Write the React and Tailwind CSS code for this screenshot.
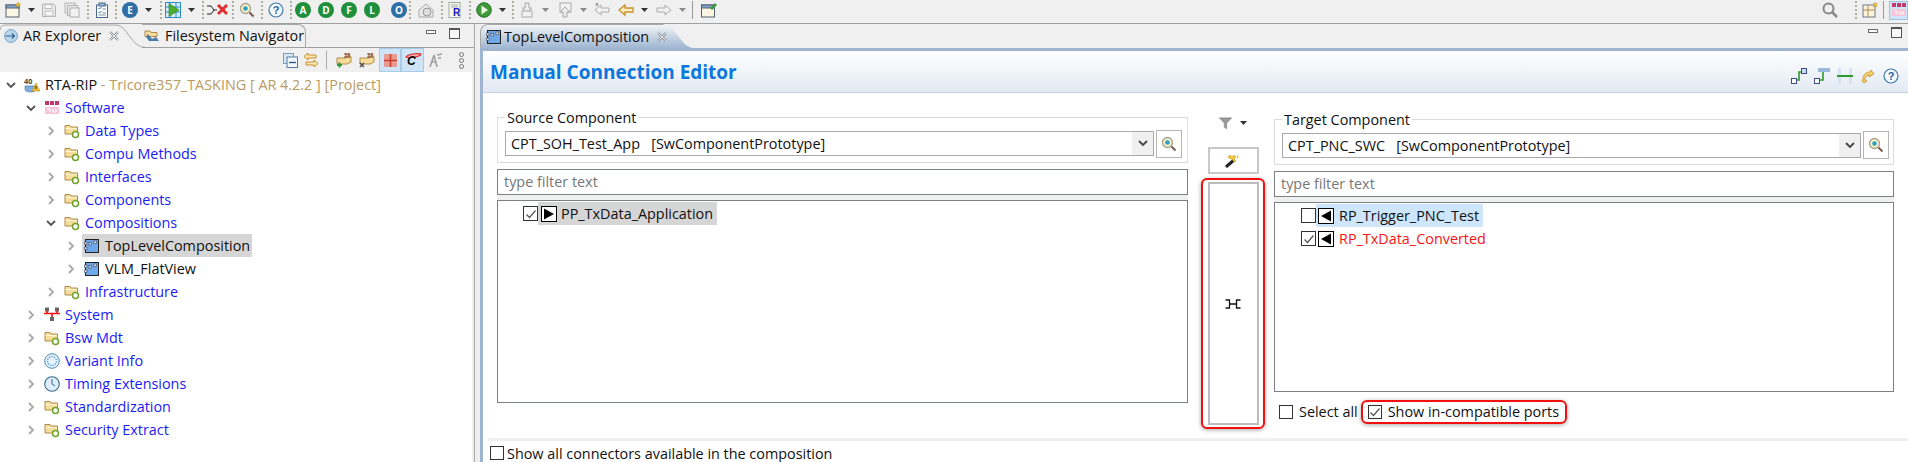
import React from 'react';

const Arrow = ({ className = 'ml-[7px]', gray }) => (
  <svg width="7" height="4" viewBox="0 0 7 4" className={`shrink-0 ${className}`}>
    <path d="M0 0h7L3.5 4z" fill={gray ? '#8a8a8a' : '#333'} />
  </svg>
);

const Dots = ({ className }) => (
  <div className={`flex flex-col gap-[2px] ${className}`}>
    <div className="w-[2px] h-[2px] bg-[#b0b0a0]" />
    <div className="w-[2px] h-[2px] bg-[#b0b0a0]" />
    <div className="w-[2px] h-[2px] bg-[#b0b0a0]" />
    <div className="w-[2px] h-[2px] bg-[#b0b0a0]" />
    <div className="w-[2px] h-[2px] bg-[#b0b0a0]" />
  </div>
);

const Ball = ({ letter, className, color = '#1f8f3c' }) => (
  <div
    className={`w-[16px] h-[16px] rounded-full flex items-center justify-center text-white text-[10px] font-bold ${className}`}
    style={{ background: color }}
  >
    {letter}
  </div>
);

const Svg16 = ({ className, children, size = 16 }) => (
  <svg width={size} height={size} viewBox="0 0 16 16" className={`shrink-0 ${className || ''}`}>
    {children}
  </svg>
);

const NewIcon = ({ className }) => (
  <Svg16 className={className}>
    <rect x="1" y="3" width="13" height="12" fill="#fbf6e4" stroke="#55606e" />
    <rect x="1" y="3" width="13" height="3" fill="#7ea6d0" stroke="#55606e" />
    <path d="M13 0l.8 1.7 1.7.3-1.3 1.2.3 1.8-1.5-.9-1.5.9.3-1.8L11 2l1.7-.3z" fill="#f2c230" stroke="#a97f10" strokeWidth=".4" />
  </Svg16>
);

const SaveIcon = ({ className }) => (
  <Svg16 className={className}>
    <path d="M1.5 2h11l2 2v10.500h-13z" fill="#ececec" stroke="#b5b5b5" />
    <rect x="4" y="2.500" width="7" height="4" fill="#f7f7f7" stroke="#bdbdbd" />
    <rect x="4" y="9" width="8" height="5" fill="#f7f7f7" stroke="#bdbdbd" />
  </Svg16>
);

const SaveAllIcon = ({ className }) => (
  <Svg16 className={className}>
    <rect x="1" y="1" width="10" height="10" fill="#e8e8e8" stroke="#b5b5b5" />
    <rect x="3.500" y="3.500" width="10" height="10" fill="#e8e8e8" stroke="#b5b5b5" />
    <rect x="6" y="6" width="9" height="9" fill="#f2f2f2" stroke="#adadad" />
  </Svg16>
);

const TaskIcon = ({ className }) => (
  <Svg16 className={className}>
    <rect x="2.500" y="3" width="11" height="12.500" fill="#fff" stroke="#48698e" />
    <rect x="5" y="1" width="6" height="3" fill="#9db8d4" stroke="#48698e" />
    <path d="M4.500 6l1 1 2-2M4.500 10l1 1 2-2" stroke="#2b6aa8" fill="none" />
    <path d="M8.500 7h3.500M8.500 11h3.500M4.500 13h7" stroke="#7c8ea3" />
  </Svg16>
);

const RunGrid = ({ className }) => (
  <Svg16 className={className}>
    <rect x="0.500" y="0.500" width="15" height="15" fill="#d9eefa" stroke="#2a8ccb" />
    <path d="M0 5h16M0 10h16M5 0v16M11 0v16" stroke="#2a8ccb" />
    <path d="M4 1.500L14 8 4 14.500z" fill="#4caf2e" stroke="#2a7a1a" strokeWidth=".6" />
  </Svg16>
);

const Magnifier = ({ className, glass = '#f7f0c8', size = 16 }) => (
  <Svg16 className={className} size={size}>
    <circle cx="6.500" cy="6.500" r="5" fill={glass} stroke="#a8a090" strokeWidth="1.300" />
    <circle cx="6.500" cy="6.500" r="2.300" fill="#2a9fc0" />
    <path d="M10.500 10.500l4 4" stroke="#7a5a48" strokeWidth="2" />
  </Svg16>
);

const Help = ({ className, size = 16 }) => (
  <Svg16 className={className} size={size}>
    <circle cx="8" cy="8" r="7" fill="#f4f9fd" stroke="#3f78a8" strokeWidth="1.200" />
    <text x="8" y="12" textAnchor="middle" fontSize="11" fontWeight="700" fill="#27629a" fontFamily="Liberation Sans">?</text>
  </Svg16>
);

const Folder = () => (
  <Svg16>
    <path d="M1 4V2.500h5L7 4h6.500v7H1z" fill="#f7dd9c" stroke="#b08a45" />
    <path d="M1.500 5.500h11.500" stroke="#fff6d8" />
    <circle cx="11.500" cy="11.500" r="3" fill="#fff" stroke="#6fa32a" strokeWidth="1.500" />
  </Svg16>
);

const SoftwareIcon = () => (
  <Svg16>
    <rect x="1" y="1" width="4" height="4" fill="#c2386a" />
    <rect x="6" y="1" width="4" height="4" fill="#c2386a" />
    <rect x="11" y="1" width="4" height="4" fill="#c2386a" />
    <rect x="1" y="7" width="14" height="7" fill="#f6c6d6" />
    <path d="M3 9h3v3M9 9v3h3V9" stroke="#fff" fill="none" />
  </Svg16>
);

const SystemIcon = () => (
  <Svg16>
    <rect x="1" y="0.500" width="4" height="4" fill="#666" />
    <rect x="11" y="0.500" width="4" height="4" fill="#666" />
    <rect x="6" y="10" width="4" height="4" fill="#666" />
    <path d="M0 6.500h16M3 4v2.500M13 4v2.500M8 6.500V10" stroke="#f01010" strokeWidth="1.600" />
  </Svg16>
);

const VariantIcon = () => (
  <Svg16>
    <circle cx="8" cy="8" r="7.300" fill="#eaf4fb" stroke="#4a8ab8" />
    <circle cx="8" cy="8" r="4.500" fill="none" stroke="#6fa6cc" strokeDasharray="1.500 1" strokeWidth="1.500" />
  </Svg16>
);

const ClockIcon = () => (
  <Svg16>
    <circle cx="8" cy="8" r="7.300" fill="#dfeef8" stroke="#36688f" strokeWidth="1.100" />
    <path d="M8 3v5l3 2" stroke="#36688f" fill="none" />
  </Svg16>
);

const ComponentIcon = () => (
  <Svg16>
    <rect x="1.500" y="1.500" width="13" height="13" fill="#6ea8e8" stroke="#222" />
    <rect x="0.500" y="4" width="2.500" height="2.500" fill="#cfe2f7" stroke="#445" strokeWidth=".6" />
    <rect x="0.500" y="9" width="2.500" height="2.500" fill="#cfe2f7" stroke="#445" strokeWidth=".6" />
    <rect x="5" y="4.500" width="2.500" height="2.500" fill="#e8f0fa" stroke="#334" strokeWidth=".6" />
    <rect x="10" y="3" width="2.500" height="2.500" fill="#e8f0fa" stroke="#334" strokeWidth=".6" />
  </Svg16>
);

const ProjectIcon = () => (
  <Svg16>
    <text x="0" y="7" fontSize="7.500" fontWeight="700" fill="#333" fontFamily="Liberation Sans">40</text>
    <path d="M1 9h11v3c0 2-2 3-5.500 3S1 14 1 12z" fill="#7fb0df" stroke="#3a6d9e" strokeWidth=".6" />
    <path d="M12 6l4 8H8z" fill="#f2c230" stroke="#a77f10" strokeWidth=".5" />
    <path d="M12 9v3" stroke="#222" />
  </Svg16>
);

const Check = ({ checked, className }) => (
  <div className={`w-[14px] h-[14px] border border-[#333] bg-white flex items-center justify-center shrink-0 ${className || ''}`}>
    {checked && (
      <svg width="12" height="12" viewBox="0 0 12 12">
        <path d="M1.500 6.500L4.500 9.500 10.500 2.500" stroke="#555" strokeWidth="1.200" fill="none" />
      </svg>
    )}
  </div>
);

const Port = ({ left }) => (
  <div className="w-[16px] h-[16px] border border-black bg-white flex items-center justify-center shrink-0">
    <svg width="12" height="12" viewBox="0 0 12 12">
      <path d={left ? 'M11 0.500v11L1 6z' : 'M1 0.500v11L11 6z'} fill="#000" />
    </svg>
  </div>
);

const treeRows = [
  { name: 'RTA-RIP', pad: 'pl-[5px]', icon: <ProjectIcon />, open: true, black: true, deco: ' - Tricore357_TASKING [ AR 4.2.2 ] [Project]' },
  { name: 'Software', pad: 'pl-[25px]', icon: <SoftwareIcon />, open: true },
  { name: 'Data Types', pad: 'pl-[45px]', icon: <Folder /> },
  { name: 'Compu Methods', pad: 'pl-[45px]', icon: <Folder /> },
  { name: 'Interfaces', pad: 'pl-[45px]', icon: <Folder /> },
  { name: 'Components', pad: 'pl-[45px]', icon: <Folder /> },
  { name: 'Compositions', pad: 'pl-[45px]', icon: <Folder />, open: true },
  { name: 'TopLevelComposition', pad: 'pl-[65px]', icon: <ComponentIcon />, black: true, selected: true },
  { name: 'VLM_FlatView', pad: 'pl-[65px]', icon: <ComponentIcon />, black: true },
  { name: 'Infrastructure', pad: 'pl-[45px]', icon: <Folder /> },
  { name: 'System', pad: 'pl-[25px]', icon: <SystemIcon /> },
  { name: 'Bsw Mdt', pad: 'pl-[25px]', icon: <Folder /> },
  { name: 'Variant Info', pad: 'pl-[25px]', icon: <VariantIcon /> },
  { name: 'Timing Extensions', pad: 'pl-[25px]', icon: <ClockIcon /> },
  { name: 'Standardization', pad: 'pl-[25px]', icon: <Folder /> },
  { name: 'Security Extract', pad: 'pl-[25px]', icon: <Folder /> },
];

const Chevron = ({ open }) => (
  <svg width="12" height="12" viewBox="0 0 12 12" className="shrink-0">
    {open
      ? <path d="M2 4l4 4 4-4" stroke="#555" strokeWidth="1.800" fill="none" />
      : <path d="M4 2l4 4-4 4" stroke="#a8a8a8" strokeWidth="1.800" fill="none" />}
  </svg>
);

const TreeRow = ({ row }) => (
  <div className={`h-[23px] flex items-center whitespace-pre ${row.pad}`}>
    <Chevron open={row.open} />
    <div className={`h-[23px] flex items-center pl-[2px] pr-[2px] ml-[5px] ${row.selected ? 'bg-[#d6d6d6]' : ''}`}>
      {row.icon}
      <span className={`ml-[5px] ${row.black ? 'text-[#111]' : 'text-[#1c1cf5]'}`}>{row.name}</span>
      {row.deco && <span className="text-[#b89a62]">{row.deco}</span>}
    </div>
  </div>
);

const MinMax = ({ gapClass }) => (
  <div className={`flex items-start ${gapClass}`}>
    <div className="w-[10px] h-[4px] mt-[5px] border border-[#666] bg-white" />
    <div className="w-[11px] h-[11px] mt-[3px] ml-[13px] border border-[#555] border-t-2 bg-[#f8f8f8]" />
  </div>
);

const CloseX = ({ className }) => (
  <svg width="10" height="10" viewBox="0 0 10 10" className={className}>
    <path d="M1 1l8 8M9 1l-8 8" stroke="#8a8f96" strokeWidth="2.400" />
    <path d="M1 1l8 8M9 1l-8 8" stroke="#fff" strokeWidth=".9" />
  </svg>
);

const SearchBtn = ({ className }) => (
  <div className={`w-[26px] h-[28px] border border-[#b5b5b5] bg-white flex items-center justify-center ${className}`}>
    <Magnifier />
  </div>
);

const Combo = ({ text, className }) => (
  <div className={`h-[25px] border border-[#a8a8ae] flex items-center justify-between whitespace-pre ${className}`}>
    <span className="pl-[5px]">{text}</span>
    <div className="w-[21px] h-[23px] bg-[#f0f0f0] flex items-center justify-center">
      <svg width="10" height="7" viewBox="0 0 10 7">
        <path d="M1 1l4 4 4-4" stroke="#444" strokeWidth="1.800" fill="none" />
      </svg>
    </div>
  </div>
);

const FilterBox = ({ className }) => (
  <div className={`border border-[#7b7f87] bg-white pl-[6px] flex items-center text-[#777] ${className}`}>
    type filter text
  </div>
);

export default function App() {
  return (
    <div
      className="w-[1908px] h-[462px] overflow-hidden flex flex-col bg-[#f0f0f0] text-[14.4px] text-[#111]"
      style={{ fontFamily: '"Open Sans", "Noto Sans", sans-serif' }}
    >
      {/* main toolbar */}
      <div className="h-[24px] shrink-0 flex items-center justify-between border-b border-[#a0a0a0] pb-[3px]">
        <div className="flex items-center">
          <NewIcon className="ml-[5px]" />
          <Arrow />
          <SaveIcon className="ml-[6px]" />
          <SaveAllIcon className="ml-[7px]" />
          <Dots className="ml-[7px]" />
          <TaskIcon className="ml-[5px]" />
          <Dots className="ml-[5px]" />
          <Ball letter="E" color="#2f6fa8" className="ml-[5px]" />
          <Arrow />
          <Dots className="ml-[8px]" />
          <RunGrid className="ml-[3px]" />
          <Arrow />
          <Dots className="ml-[7px]" />
          <svg width="22" height="12" viewBox="0 0 22 12" className="ml-[3px] shrink-0">
            <path d="M0 2h4l3 4-3 4H0M7 6h3" stroke="#222" fill="none" />
            <path d="M11 1l9 9M20 1l-9 9" stroke="#e23030" strokeWidth="3" />
          </svg>
          <Dots className="ml-[3px]" />
          <Magnifier className="ml-[5px]" />
          <Dots className="ml-[6px]" />
          <Help className="ml-[5px]" />
          <Dots className="ml-[6px]" />
          <Ball letter="A" className="ml-[3px]" />
          <Ball letter="D" className="ml-[7px]" />
          <Ball letter="F" className="ml-[7px]" />
          <Ball letter="L" className="ml-[7px]" />
          <Ball letter="O" color="#2f6fa8" className="ml-[11px]" />
          <Dots className="ml-[2px]" />
          <Svg16 className="ml-[7px]">
            <path d="M1 8l7-6 7 6v7H1z" fill="#ececec" stroke="#aaa" />
            <circle cx="9" cy="10" r="4" fill="#ddd" stroke="#999" />
          </Svg16>
          <Dots className="ml-[7px]" />
          <Svg16 className="ml-[5px]">
            <rect x="1" y="0.500" width="11" height="15" fill="#fdf8e4" stroke="#9aa" />
            <path d="M3 3h7M3 5h7" stroke="#9ab" />
            <text x="5" y="13.500" fontSize="10" fontWeight="700" fill="#1515c8" fontFamily="Liberation Sans">R</text>
          </Svg16>
          <Dots className="ml-[5px]" />
          <Svg16 className="ml-[5px]">
            <circle cx="8" cy="8" r="7.300" fill="#3f9a3a" stroke="#24702a" />
            <path d="M5.500 3.500L12 8l-6.500 4.500z" fill="#eef6e8" />
          </Svg16>
          <Arrow />
          <Dots className="ml-[6px]" />
          <Svg16 className="ml-[5px]">
            <path d="M6 1h4v5h3L8 11 3 6h3z" fill="#ececec" stroke="#aaa" />
            <rect x="3" y="9" width="10" height="6" fill="#f2f2f2" stroke="#aaa" />
          </Svg16>
          <Arrow gray />
          <Svg16 className="ml-[8px]">
            <rect x="3" y="1" width="11" height="9" fill="#f2f2f2" stroke="#aaa" />
            <path d="M6 15v-5H3l5-5 5 5h-3v5z" fill="#ececec" stroke="#aaa" />
          </Svg16>
          <Arrow gray />
          <Svg16 className="ml-[7px]">
            <path d="M1 8l6-5v3h8v4H7v3z" fill="#f2f2f2" stroke="#aaa" />
            <path d="M3 0l.6 1.500 1.400.2-1 1 .3 1.500-1.300-.7-1.300.7.3-1.500-1-1 1.400-.2z" fill="#999" />
          </Svg16>
          <Svg16 className="ml-[8px]">
            <path d="M1 8l6-5v3h8v4H7v3z" fill="#fdf0c4" stroke="#c8902a" strokeWidth="1.300" />
          </Svg16>
          <Arrow />
          <Svg16 className="ml-[8px]">
            <path d="M15 8L9 3v3H1v4h8v3z" fill="#f2f2f2" stroke="#aaa" />
          </Svg16>
          <Arrow gray />
          <div className="w-px h-[18px] bg-[#999] ml-[6px]" />
          <Svg16 className="ml-[8px]">
            <rect x="0.500" y="3" width="13" height="12" fill="#fbf6e4" stroke="#55606e" />
            <rect x="0.500" y="3" width="13" height="3" fill="#7ea6d0" stroke="#55606e" />
            <path d="M9 6l5-5 2 2-5 5z" fill="#3f9a3a" />
          </Svg16>
        </div>
        <div className="flex items-center">
          <svg width="16" height="16" viewBox="0 0 16 16">
            <circle cx="6.500" cy="6.500" r="5" fill="none" stroke="#888" strokeWidth="2" />
            <path d="M10 10l5 5" stroke="#888" strokeWidth="2.500" />
          </svg>
          <Dots className="ml-[17px]" />
          <Svg16 className="ml-[5px]">
            <rect x="1" y="3" width="12" height="12" fill="#fbf3dd" stroke="#6a7a8c" />
            <path d="M1 8h12M6 3v12" stroke="#b5884a" />
            <path d="M13 0l.8 1.700 1.700.3-1.300 1.200.3 1.800-1.500-.9-1.500.9.3-1.800L11 2l1.700-.3z" fill="#f2c230" stroke="#a97f10" strokeWidth=".4" />
          </Svg16>
          <div className="w-px h-[18px] bg-[#999] ml-[5px]" />
          <div className="w-[19px] h-[19px] ml-[5px] bg-[#cfe4f7] border border-[#9cc4e6] flex items-center justify-center overflow-hidden">
            <SoftwareIcon />
          </div>
        </div>
      </div>

      <div className="flex-1 flex min-h-0">
        {/* left view */}
        <div className="w-[475px] shrink-0 flex flex-col border-r border-[#a8a8a8]">
          {/* view tabs */}
          <div className="h-[24px] shrink-0 flex">
            <div className="w-[146px] h-[24px] flex items-center pl-[3px] relative shrink-0">
              <svg width="12" height="12" viewBox="0 0 16 16" className="shrink-0 mr-[5px] ml-[1px] w-[14px] h-[14px]">
                <circle cx="8" cy="8" r="7.300" fill="#bcd6ee" stroke="#6a94bb" />
                <path d="M2 8h10M9 5l3 3-3 3" stroke="#2a5a8c" fill="none" strokeWidth="1.300" />
              </svg>
              <span>AR Explorer</span>
              <CloseX className="ml-[8px]" />
              <svg width="146" height="24" viewBox="0 0 146 24" className="absolute left-0 top-0">
                <path d="M0 6 Q0 1 6 1 H116 C128 1 130 23.500 146 23.500" fill="none" stroke="#a8a8a8" />
              </svg>
            </div>
            <div className="w-[164px] h-[24px] -ml-[4px] pl-[2px] flex items-center rounded-tr-[8px] border-t border-r border-b border-t-[#a8a8a8] border-r-[#a8a8a8] border-b-[#a0a0a0] relative shrink-0">
              <Svg16 className="mr-[5px]">
                <path d="M1 3h5l1 1.500h6v4H1z" fill="#f7dd9c" stroke="#b08a45" />
                <path d="M2 9l2-3 4 5 4-2 3 4H5z" fill="#4a7ba8" />
              </Svg16>
              <span className="whitespace-pre">Filesystem Navigator</span>
            </div>
            <div className="flex-1 h-[24px] border-b border-[#a0a0a0]">
              <MinMax gapClass="ml-[120px] mt-[1px]" />
            </div>
          </div>
          {/* view toolbar */}
          <div className="h-[24px] shrink-0 flex items-center">
            <svg width="15" height="15" viewBox="0 0 15 15" className="ml-[283px]">
              <rect x="0.500" y="0.500" width="10" height="10" fill="#dbe7f3" stroke="#7d9cbc" />
              <rect x="4" y="4" width="10.500" height="10.500" fill="#f3f7fb" stroke="#4f7ca8" />
              <path d="M6 9.500h7" stroke="#2a5a8c" strokeWidth="1.400" />
            </svg>
            <svg width="16" height="16" viewBox="0 0 16 16" className="ml-[5px]">
              <path d="M5 1L1 4.500 5 8V6h8V3H5zM11 8l4 3.500-4 3.500v-2H3v-3h8z" fill="#fbe6b0" stroke="#c8902a" />
            </svg>
            <div className="w-px h-[18px] bg-[#aaa] ml-[7px]" />
            <Svg16 className="ml-[9px]">
              <path d="M1 6h9l3-4 2 3v5l-4 2H1z" fill="#f7dd9c" stroke="#b08a45" />
              <path d="M8 2h6M8 5h6M10 1v5M13 1v5" stroke="#8a4a30" />
              <path d="M1 13h5M3.500 10.500v5" stroke="#2c9a3a" strokeWidth="2" />
            </Svg16>
            <Svg16 className="ml-[7px]">
              <path d="M1 6h9l3-4 2 3v5l-4 2H1z" fill="#f7dd9c" stroke="#b08a45" />
              <path d="M8 2h6M8 5h6M10 1v5M13 1v5" stroke="#8a4a30" />
              <path d="M1 11l4 4M5 11l-4 4" stroke="#555" strokeWidth="1.600" />
            </Svg16>
            <div className="w-[22px] h-[24px] ml-[4px] bg-[#cfe4f7] border border-[#a8cce8] flex items-center justify-center">
              <svg width="13" height="13" viewBox="0 0 13 13">
                <rect width="13" height="13" rx="1" fill="#e89a90" />
                <path d="M0 6.500h13M6.500 0v13" stroke="#c83a2a" strokeWidth="1.500" />
              </svg>
            </div>
            <div className="w-[23px] h-[24px] bg-[#cfe4f7] border border-[#a8cce8] flex items-center justify-center">
              <svg width="18" height="16" viewBox="0 0 18 16">
                <path d="M2 5c2-3 12-4 15-3 0 2-10 5-15 3z" fill="#f5b5b5" stroke="#e02020" strokeWidth="1.200" />
                <text x="3" y="13" fontSize="12" fontWeight="700" fill="#000" fontStyle="italic" fontFamily="Liberation Sans">C</text>
              </svg>
            </div>
            <svg width="16" height="16" viewBox="0 0 16 16" className="ml-[3px]">
              <path d="M7 3L3 15M7 3l3 12M4 10h5M10 3l5-1M11 6l3 0" stroke="#a0a0a0" strokeWidth="1.600" fill="none" />
            </svg>
            <div className="flex flex-col gap-[1px] ml-[16px]">
              <div className="w-[5px] h-[5px] rounded-full border border-[#777]" />
              <div className="w-[5px] h-[5px] rounded-full border border-[#777]" />
              <div className="w-[5px] h-[5px] rounded-full border border-[#777]" />
            </div>
          </div>
          {/* project tree */}
          <div className="flex-1 bg-white border-l border-[#e8e8e8] -ml-px pr-[2px] mr-[2px] pt-[1px] overflow-hidden">
            {treeRows.map((row) => <TreeRow key={row.name} row={row} />)}
          </div>
        </div>

        {/* editor */}
        <div className="flex-1 min-w-0 flex flex-col ml-[5px]">
          <div className="h-[24px] shrink-0 flex items-start">
            <div className="w-[212px] h-[24px] flex items-center pl-[5px] rounded-tl-[8px] bg-linear-to-b from-[#f2f4f7] to-[#a0b7d2] border-t border-l border-[#a8a8a8] shrink-0 [clip-path:polygon(0_0,86%_0,90%_12%,94%_55%,97%_88%,100%_100%,0_100%)]">
              <ComponentIcon />
              <span className="ml-[2px]">TopLevelComposition</span>
              <CloseX className="ml-[8px]" />
            </div>
            <MinMax gapClass="ml-[1176px]" />
          </div>
          <div className="flex-1 min-h-0 flex flex-col bg-white border-l-[3px] border-t-[3px] border-[#9db5d1]">
            {/* form header */}
            <div className="h-[42px] shrink-0 flex items-center justify-between bg-linear-to-b from-white to-[#e2eaf3] border-b border-[#c8d0dc] pl-[7px] pr-[9px]">
              <h1 className="text-[19px] font-bold text-[#0b76dc] mt-[2px]">Manual Connection Editor</h1>
              <div className="flex items-center gap-[7px] mt-[8px]">
                <Svg16>
                  <rect x="0.500" y="10.500" width="5" height="5" fill="#fff" stroke="#3a4a8a" />
                  <rect x="10.500" y="0.500" width="5" height="5" fill="#cfdcf0" stroke="#3a4a8a" />
                  <path d="M6 12h2V4h2" stroke="#2c9a2c" strokeWidth="1.600" fill="none" />
                </Svg16>
                <Svg16>
                  <rect x="0.500" y="10.500" width="5" height="5" fill="#fff" stroke="#3a4a8a" />
                  <rect x="4" y="0" width="12" height="4" fill="#9ab8de" />
                  <path d="M6 12h3V4" stroke="#2c9a2c" strokeWidth="1.600" fill="none" />
                </Svg16>
                <Svg16>
                  <path d="M1 0h3v16H1zM12 0h3v16h-3z" fill="#d4e2f2" />
                  <path d="M0 8h16" stroke="#2c9a2c" strokeWidth="2" />
                </Svg16>
                <Svg16>
                  <path d="M2 13l2 2 3-2-2-1c0-3 2-5 5-5l-1 2 5-3-3-4-1 2c-4 0-7 3-7 7z" fill="#f5cf6a" stroke="#c8902a" strokeWidth=".8" />
                </Svg16>
                <Help />
              </div>
            </div>

            {/* form body */}
            <div className="h-[345px] shrink-0 flex pl-[14px] pr-[14px]">
              {/* source column */}
              <div className="w-[691px] shrink-0 pt-[24px] flex flex-col">
                <div className="h-[46px] shrink-0 border border-[#dcdcdc] relative flex pl-[7px] pt-[13px] items-start">
                  <span className="absolute left-[7px] -top-[10px] bg-white px-[2px] leading-[19px]">Source Component</span>
                  <Combo text="CPT_SOH_Test_App   [SwComponentPrototype]" className="w-[649px]" />
                  <SearchBtn className="ml-[2px] -mt-[1px]" />
                </div>
                <div className="flex-1 flex flex-col mt-[6px] mb-[35px] bg-[#f0f0f0] gap-[5px]">
                  <FilterBox className="h-[26px]" />
                  <div className="flex-1 border border-[#7b7f87] bg-white pl-[25px]">
                    <div className="h-[23px] mt-[1px] flex items-center">
                      <Check checked className="w-[15px] h-[15px]" />
                      <div className="h-[23px] flex items-center bg-[#d6d6d6] pl-[3px] pr-[4px]">
                        <Port />
                        <span className="ml-[4px]">PP_TxData_Application</span>
                      </div>
                    </div>
                  </div>
                </div>
              </div>

              {/* center column */}
              <div className="w-[64px] shrink-0 ml-[13px] flex flex-col items-center pt-[23px]">
                <div className="h-[14px] flex items-center">
                  <svg width="13" height="12" viewBox="0 0 15 14">
                    <path d="M0 1h15L9 7v7l-3-2V7z" fill="#999" stroke="#777" strokeWidth=".5" />
                  </svg>
                  <Arrow className="ml-[8px]" />
                </div>
                <div className="w-[51px] h-[27px] mt-[17px] border-2 border-[#c8c8c8] flex items-center justify-center">
                  <svg width="16" height="14" viewBox="0 0 16 14">
                    <path d="M1 13L9 6" stroke="#222" strokeWidth="3" />
                    <path d="M3 3l2-2 2 2 2-2 2 2-2 2 2 2-2 1-2-3-3-1z" fill="#f5c832" stroke="#b88a10" strokeWidth=".5" />
                    <path d="M12 1l2 2-2 2z" fill="#f5c832" />
                  </svg>
                </div>
                <div className="w-[64px] h-[251px] mt-[4px] shrink-0 p-[2px] border-2 border-[#f01010] rounded-[6px] shadow-[0_1px_4px_rgba(0,0,0,0.35)] bg-white flex flex-col items-center justify-center">
                  <div className="w-[51px] h-[245px] border-2 border-[#bcbcbc] flex items-center justify-center">
                    <svg width="16" height="10" viewBox="0 0 16 10">
                      <path d="M0.500 1h4v8h-4M15.500 1h-4v8h4M4.500 5h7" stroke="#111" strokeWidth="1.300" fill="none" />
                    </svg>
                  </div>
                </div>
              </div>

              {/* target column */}
              <div className="flex-1 min-w-0 ml-[9px] pt-[26px] flex flex-col">
                <div className="h-[46px] shrink-0 border border-[#dcdcdc] relative flex pl-[7px] pt-[13px] items-start">
                  <span className="absolute left-[7px] -top-[10px] bg-white px-[2px] leading-[19px]">Target Component</span>
                  <Combo text="CPT_PNC_SWC   [SwComponentPrototype]" className="w-[579px]" />
                  <SearchBtn className="ml-[2px] -mt-[2px]" />
                </div>
                <div className="h-[221px] flex flex-col mt-[6px] bg-[#f0f0f0] gap-[5px]">
                  <FilterBox className="h-[26px]" />
                  <div className="flex-1 border border-[#7b7f87] bg-white pl-[26px]">
                    <div className="h-[23px] mt-[1px] flex items-center">
                      <Check className="w-[15px] h-[15px]" />
                      <div className="h-[23px] flex items-center bg-[#cde6fb] pl-[2px] pr-[4px]">
                        <Port left />
                        <span className="ml-[5px]">RP_Trigger_PNC_Test</span>
                      </div>
                    </div>
                    <div className="h-[23px] flex items-center">
                      <Check checked className="w-[15px] h-[15px]" />
                      <div className="h-[23px] flex items-center pl-[2px]">
                        <Port left />
                        <span className="ml-[5px] text-[#f81414]">RP_TxData_Converted</span>
                      </div>
                    </div>
                  </div>
                </div>
                <div className="flex items-center mt-[8px] pl-[5px]">
                  <Check />
                  <span className="ml-[6px]">Select all</span>
                  <div className="h-[24px] ml-[3px] flex items-center border-2 border-[#f01010] rounded-[6px] shadow-[0_1px_4px_rgba(0,0,0,0.35)] pl-[5px] pr-[6px]">
                    <Check checked />
                    <span className="ml-[6px] whitespace-pre">Show in-compatible ports</span>
                  </div>
                </div>
              </div>
            </div>

            {/* footer */}
            <div className="h-[3px] shrink-0 ml-[5px] bg-[#f0f0f0]" />
            <div className="flex-1 flex items-center pl-[7px]">
              <Check />
              <span className="ml-[3px] mt-[2px]">Show all connectors available in the composition</span>
            </div>
          </div>
        </div>
      </div>
    </div>
  );
}
